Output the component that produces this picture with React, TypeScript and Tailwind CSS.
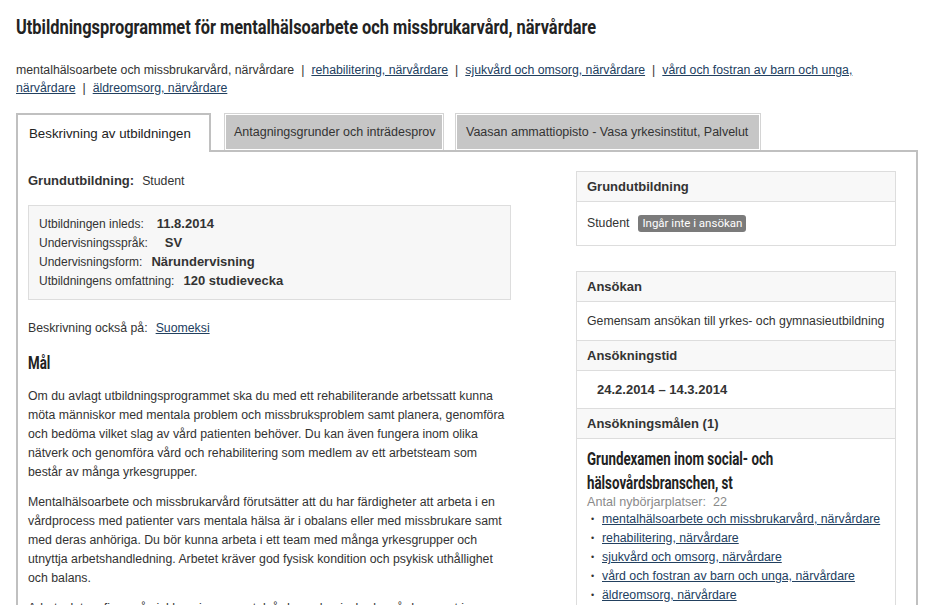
const head = "font-['Roboto','Liberation_Sans',sans-serif] font-bold text-[#222] whitespace-nowrap origin-left";

const crumbs = [
  { text: 'mentalhälsoarbete och missbrukarvård, närvårdare', link: false },
  { text: 'rehabilitering, närvårdare', link: true },
  { text: 'sjukvård och omsorg, närvårdare', link: true },
  { text: 'vård och fostran av barn och unga, närvårdare', link: true },
  { text: 'äldreomsorg, närvårdare', link: true },
];

const facts = [
  { label: 'Utbildningen inleds:', value: '11.8.2014', gap: 'ml-[13px]' },
  { label: 'Undervisningsspråk:', value: 'SV', gap: 'ml-[17px]' },
  { label: 'Undervisningsform:', value: 'Närundervisning', gap: 'ml-[9px]' },
  { label: 'Utbildningens omfattning:', value: '120 studievecka', gap: 'ml-[9px]' },
];

const targets = [
  'mentalhälsoarbete och missbrukarvård, närvårdare',
  'rehabilitering, närvårdare',
  'sjukvård och omsorg, närvårdare',
  'vård och fostran av barn och unga, närvårdare',
  'äldreomsorg, närvårdare',
];

function BoxHeader({ children }: { children: React.ReactNode }) {
  return (
    <div className="h-[30px] flex items-center px-[10px] bg-[#f8f8f8] border-b border-[#dddddd] text-[13px] font-bold text-[#333]">
      {children}
    </div>
  );
}

export default function App() {
  return (
    <div className="w-[934px] h-[605px] overflow-hidden bg-white px-[16px] pt-[12px] font-['Liberation_Sans',Arial,sans-serif] text-[12.3px] text-[#333]">
      {/* ========== title ========== */}
      <h1 className={`${head} scale-x-[0.78] text-[21px] leading-[30px]`}>
        Utbildningsprogrammet för mentalhälsoarbete och missbrukarvård, närvårdare
      </h1>

      <p className="mt-[19px] w-[880px] leading-[18px] text-[#333]">
        {crumbs.map((c, i) => (
          <span key={i}>
            {i > 0 && <span className="mx-[7px]">|</span>}
            {c.link ? (
              <a href="#" className="underline text-[#22405f]">
                {c.text}
              </a>
            ) : (
              c.text
            )}
          </span>
        ))}
      </p>

      {/* ========== tabs ========== */}
      <div className="mt-[16px] flex items-end h-[37px]">
        <div className="relative z-10 -mb-[2px] h-[39px] w-[195px] bg-white border-2 border-b-0 border-[#c0c0c0] pl-[11px] pt-[9px] text-[13.3px] text-[#222]">
          Beskrivning av utbildningen
        </div>
        <div className="ml-[13px] h-[37px] w-[220px] bg-[#c6c6c6] border border-b-0 border-[#d4d4d4] shadow-[inset_0_0_0_1px_#ffffff] pl-[9px] pt-[9px] text-[12.5px] text-[#333] whitespace-nowrap">
          Antagningsgrunder och inträdesprov
        </div>
        <div className="ml-[11px] h-[37px] w-[306px] bg-[#c6c6c6] border border-b-0 border-[#d4d4d4] shadow-[inset_0_0_0_1px_#ffffff] pl-[10px] pt-[9px] text-[12.5px] text-[#333] whitespace-nowrap">
          Vaasan ammattiopisto - Vasa yrkesinstitut, Palvelut
        </div>
      </div>

      {/* ========== panel ========== */}
      <div className="w-[902px] h-[500px] border-2 border-[#c0c0c0] pl-[10px] pr-[20px] pt-[19px] flex">
        <div className="w-[483px] shrink-0 leading-[19px]">
          <p>
            <span className="font-bold text-[13px]">Grundutbildning:</span>
            <span className="ml-[8px]">Student</span>
          </p>

          <div className="mt-[14px] border border-[#dddddd] bg-[#f7f7f7] px-[10px] pt-[8px] pb-[9px] text-[12px]">
            {facts.map((f) => (
              <div key={f.label} className="h-[19px]">
                {f.label}
                <span className={`${f.gap} font-bold text-[13px]`}>{f.value}</span>
              </div>
            ))}
          </div>

          <p className="mt-[19px]">
            Beskrivning också på:
            <a href="#" className="ml-[8px] underline text-[#22405f]">
              Suomeksi
            </a>
          </p>

          <h2 className={`${head} scale-x-[0.74] mt-[13px] text-[18px] leading-[24px]`}>Mål</h2>

          <p className="mt-[12px]">
            Om du avlagt utbildningsprogrammet ska du med ett rehabiliterande arbetssatt kunna möta människor med
            mentala problem och missbruksproblem samt planera, genomföra och bedöma vilket slag av vård patienten
            behöver. Du kan även fungera inom olika nätverk och genomföra vård och rehabilitering som medlem av ett
            arbetsteam som består av många yrkesgrupper.
          </p>
          <p className="mt-[11px]">
            Mentalhälsoarbete och missbrukarvård förutsätter att du har färdigheter att arbeta i en vårdprocess med
            patienter vars mentala hälsa är i obalans eller med missbrukare samt med deras anhöriga. Du bör kunna
            arbeta i ett team med många yrkesgrupper och utnyttja arbetshandledning. Arbetet kräver god fysisk
            kondition och psykisk uthållighet och balans.
          </p>
          <p className="mt-[11px]">
            Arbetsplatser finns på sjukhus, inom mentalvården och missbrukarvården samt inom öppenvården.
          </p>
        </div>

        <div className="ml-[65px] w-[320px] shrink-0 leading-[19px]">
          <div className="border border-[#dddddd]">
            <BoxHeader>Grundutbildning</BoxHeader>
            <div className="h-[43px] flex items-center px-[10px]">
              Student
              <span className="ml-[9px] rounded-[3px] bg-[#7b7b7b] px-[4px] font-['Roboto',sans-serif] text-[11.5px] leading-[17px] text-white">
                Ingår inte i ansökan
              </span>
            </div>
          </div>

          <div className="mt-[25px] border border-[#dddddd]">
            <BoxHeader>Ansökan</BoxHeader>
            <div className="h-[39px] flex items-center px-[10px] border-b border-[#dddddd]">
              Gemensam ansökan till yrkes- och gymnasieutbildning
            </div>
            <BoxHeader>Ansökningstid</BoxHeader>
            <div className="h-[38px] flex items-center pl-[20px] text-[13px] font-bold border-b border-[#dddddd]">
              24.2.2014 – 14.3.2014
            </div>
            <BoxHeader>Ansökningsmålen (1)</BoxHeader>
            <div className="px-[10px] pt-[8px] pb-[10px]">
              <h3 className={`${head} scale-x-[0.74] text-[18px] leading-[24px]`}>
                Grundexamen inom social- och
                <br />
                hälsovårdsbranschen, st
              </h3>
              <p className="text-[#8a8a8a] text-[12.6px] leading-[14px]">
                Antal nybörjarplatser:<span className="ml-[7px]">22</span>
              </p>
              <ul className="mt-[1px]">
                {targets.map((t) => (
                  <li key={t} className="flex items-center leading-[19px] whitespace-nowrap">
                    <span className="w-[15px] text-[9px] pl-[4px]">•</span>
                    <a href="#" className="underline text-[#22405f]">
                      {t}
                    </a>
                  </li>
                ))}
              </ul>
            </div>
          </div>
        </div>
      </div>
    </div>
  );
}
